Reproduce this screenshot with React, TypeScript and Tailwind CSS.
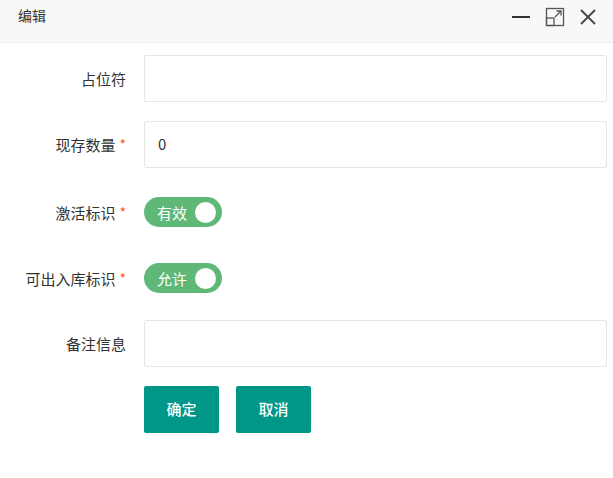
import React from "react";

const font = { fontFamily: '"Noto Sans CJK SC", "Noto Sans", sans-serif' };

function Label({ text, req }: { text: string; req?: boolean }) {
  return (
    <div className="w-[126px] shrink-0 text-right text-[15px] text-[#333] leading-none">
      {text}
      {req && <span className="text-[#ff5722] ml-[4px] text-[14px] relative top-[-1px]">*</span>}
    </div>
  );
}

function Input({ value }: { value?: string }) {
  return (
    <div className="ml-[18px] w-[463px] h-[47px] border border-[#e6e6e6] rounded-[2px] bg-white flex items-center pl-[13px] text-[15px] text-[#333]">
      {value}
    </div>
  );
}

function Switch({ text }: { text: string }) {
  return (
    <div className="ml-[18px] w-[78px] h-[30px] rounded-full bg-[#5fb878] flex items-center pl-[13px] pr-[6px] justify-between">
      <span className="text-white text-[15px] leading-none">{text}</span>
      <span className="w-[21px] h-[21px] rounded-full bg-white" />
    </div>
  );
}

export default function App() {
  return (
    <div className="w-[613px] h-[478px] bg-white" style={font}>
      <div className="h-[43px] bg-[#f8f8f8] border-b border-[#eee] flex items-center justify-between pl-[18px] pr-[16px]">
        <span className="text-[14px] text-[#333] relative top-[-6px]">编辑</span>
        <div className="flex items-center gap-[14px] relative top-[-4px]">
          <svg width="20" height="20" viewBox="0 0 20 20">
            <line x1="1" y1="10" x2="19" y2="10" stroke="#333" strokeWidth="2" />
          </svg>
          <svg width="20" height="20" viewBox="0 0 20 20" fill="none" stroke="#555" strokeWidth="1.3">
            <rect x="1.5" y="1.5" width="17" height="17" />
            <rect x="1.5" y="11" width="7.5" height="7.5" />
            <line x1="10" y1="10" x2="16" y2="4" />
            <polyline points="11.5,4 16,4 16,8.5" />
          </svg>
          <svg width="18" height="18" viewBox="0 0 18 18" stroke="#444" strokeWidth="1.8">
            <line x1="2" y1="2" x2="16" y2="16" />
            <line x1="16" y1="2" x2="2" y2="16" />
          </svg>
        </div>
      </div>
      <div className="pt-[12px]">
        <div className="flex items-center h-[47px]">
          <Label text="占位符" />
          <Input />
        </div>
        <div className="flex items-center h-[47px] mt-[19px]">
          <Label text="现存数量" req />
          <Input value="0" />
        </div>
        <div className="flex items-center h-[30px] mt-[29px]">
          <Label text="激活标识" req />
          <Switch text="有效" />
        </div>
        <div className="flex items-center h-[30px] mt-[36px]">
          <Label text="可出入库标识" req />
          <Switch text="允许" />
        </div>
        <div className="flex items-center h-[47px] mt-[27px]">
          <Label text="备注信息" />
          <Input />
        </div>
        <div className="flex items-center mt-[19px] ml-[144px] gap-[17px]">
          <button className="w-[75px] h-[47px] bg-[#009688] text-white text-[15px] font-medium rounded-[2px]">确定</button>
          <button className="w-[75px] h-[47px] bg-[#009688] text-white text-[15px] font-medium rounded-[2px]">取消</button>
        </div>
      </div>
    </div>
  );
}
